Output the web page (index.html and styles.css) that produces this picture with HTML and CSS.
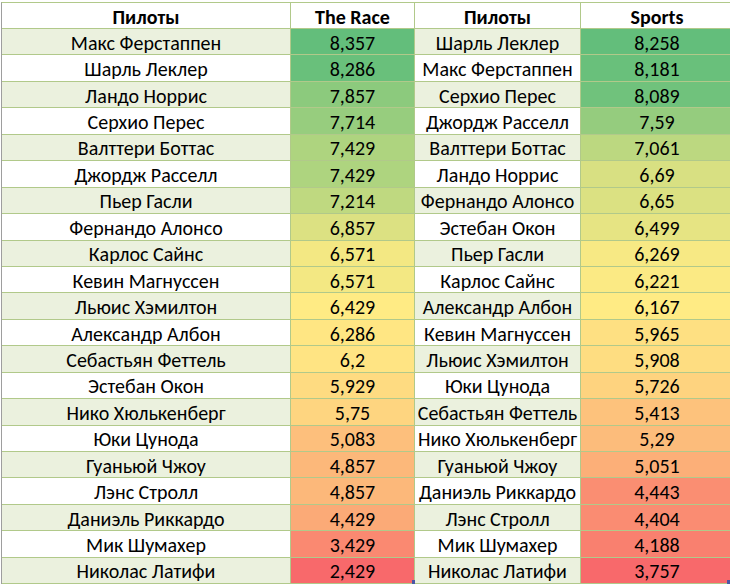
FILE: index.html
```html
<!DOCTYPE html>
<html lang="ru">
<head>
<meta charset="utf-8">
<title>Пилоты</title>
<link rel="stylesheet" href="styles.css">
</head>
<body>
<div class="sheet">
  <div class="grid">
    <div class="cell head">Пилоты</div><div class="cell head">The Race</div><div class="cell head">Пилоты</div><div class="cell head last">Sports</div>

    <div class="cell alt">Макс Ферстаппен</div><div class="cell num" style="background:rgb(99,190,123)">8,357</div><div class="cell alt">Шарль Леклер</div><div class="cell num last" style="background:rgb(99,190,123)">8,258</div>
    <div class="cell">Шарль Леклер</div><div class="cell num" style="background:rgb(105,192,123)">8,286</div><div class="cell">Макс Ферстаппен</div><div class="cell num last" style="background:rgb(105,192,123)">8,181</div>
    <div class="cell alt">Ландо Норрис</div><div class="cell num" style="background:rgb(140,202,125)">7,857</div><div class="cell alt">Серхио Перес</div><div class="cell num last" style="background:rgb(112,194,124)">8,089</div>
    <div class="cell">Серхио Перес</div><div class="cell num" style="background:rgb(151,205,126)">7,714</div><div class="cell">Джордж Расселл</div><div class="cell num last" style="background:rgb(149,204,126)">7,59</div>
    <div class="cell alt">Валттери Боттас</div><div class="cell num" style="background:rgb(174,212,127)">7,429</div><div class="cell alt">Валттери Боттас</div><div class="cell num last" style="background:rgb(188,216,128)">7,061</div>
    <div class="cell">Джордж Расселл</div><div class="cell num" style="background:rgb(174,212,127)">7,429</div><div class="cell">Ландо Норрис</div><div class="cell num last" style="background:rgb(216,224,130)">6,69</div>
    <div class="cell alt">Пьер Гасли</div><div class="cell num" style="background:rgb(191,217,128)">7,214</div><div class="cell alt">Фернандо Алонсо</div><div class="cell num last" style="background:rgb(219,225,130)">6,65</div>
    <div class="cell">Фернандо Алонсо</div><div class="cell num" style="background:rgb(220,225,130)">6,857</div><div class="cell">Эстебан Окон</div><div class="cell num last" style="background:rgb(230,228,131)">6,499</div>
    <div class="cell alt">Карлос Сайнс</div><div class="cell num" style="background:rgb(243,232,131)">6,571</div><div class="cell alt">Пьер Гасли</div><div class="cell num last" style="background:rgb(247,233,132)">6,269</div>
    <div class="cell">Кевин Магнуссен</div><div class="cell num" style="background:rgb(243,232,131)">6,571</div><div class="cell">Карлос Сайнс</div><div class="cell num last" style="background:rgb(251,234,132)">6,221</div>
    <div class="cell alt">Льюис Хэмилтон</div><div class="cell num" style="background:rgb(255,235,132)">6,429</div><div class="cell alt">Александр Албон</div><div class="cell num last" style="background:rgb(255,235,132)">6,167</div>
    <div class="cell">Александр Албон</div><div class="cell num" style="background:rgb(255,230,131)">6,286</div><div class="cell">Кевин Магнуссен</div><div class="cell num last" style="background:rgb(254,224,130)">5,965</div>
    <div class="cell alt">Себастьян Феттель</div><div class="cell num" style="background:rgb(255,228,131)">6,2</div><div class="cell alt">Льюис Хэмилтон</div><div class="cell num last" style="background:rgb(254,221,129)">5,908</div>
    <div class="cell">Эстебан Окон</div><div class="cell num" style="background:rgb(254,219,129)">5,929</div><div class="cell">Юки Цунода</div><div class="cell num last" style="background:rgb(254,211,127)">5,726</div>
    <div class="cell alt">Нико Хюлькенберг</div><div class="cell num" style="background:rgb(254,213,128)">5,75</div><div class="cell alt">Себастьян Феттель</div><div class="cell num last" style="background:rgb(253,194,124)">5,413</div>
    <div class="cell">Юки Цунода</div><div class="cell num" style="background:rgb(253,191,124)">5,083</div><div class="cell">Нико Хюлькенберг</div><div class="cell num last" style="background:rgb(252,188,123)">5,29</div>
    <div class="cell alt">Гуаньюй Чжоу</div><div class="cell num" style="background:rgb(252,184,122)">4,857</div><div class="cell alt">Гуаньюй Чжоу</div><div class="cell num last" style="background:rgb(252,175,120)">5,051</div>
    <div class="cell">Лэнс Стролл</div><div class="cell num" style="background:rgb(252,184,122)">4,857</div><div class="cell">Даниэль Риккардо</div><div class="cell num last" style="background:rgb(250,142,114)">4,443</div>
    <div class="cell alt">Даниэль Риккардо</div><div class="cell num" style="background:rgb(251,170,119)">4,429</div><div class="cell alt">Лэнс Стролл</div><div class="cell num last" style="background:rgb(250,140,114)">4,404</div>
    <div class="cell">Мик Шумахер</div><div class="cell num" style="background:rgb(250,137,113)">3,429</div><div class="cell">Мик Шумахер</div><div class="cell num last" style="background:rgb(249,128,111)">4,188</div>
    <div class="cell alt">Николас Латифи</div><div class="cell num" style="background:rgb(248,105,107)">2,429</div><div class="cell alt">Николас Латифи</div><div class="cell num last" style="background:rgb(248,105,107)">3,757</div>
  </div>
  <span class="handle handle-a"></span>
  <span class="handle handle-b"></span>
</div>
</body>
</html>
```

FILE: styles.css
```css
html, body {
  margin: 0;
  padding: 0;
  background: #ffffff;
  overflow: hidden;
}

body {
  width: 730px;
  height: 584px;
  font-family: Carlito, Calibri, "Liberation Sans", Arial, sans-serif;
  color: #000000;
}

.sheet {
  position: relative;
  width: 730px;
  height: 584px;
  overflow: hidden;
  padding-top: 2px;
  box-sizing: border-box;
}

.grid {
  display: grid;
  grid-template-columns: 289px 124px 166px 152px;
  grid-template-rows: 26px;
  grid-auto-rows: 26.45px;
  width: 731px;
  border-top: 1px solid #b1c98a;
  border-left: 1px solid #9e9e9e;
  margin-left: 1px;
}

.cell {
  display: flex;
  align-items: center;
  justify-content: center;
  padding-top: 2px;
  box-sizing: border-box;
  border-right: 1px solid #b1c98a;
  border-bottom: 1px solid #b1c98a;
  font-size: 20px;
  white-space: nowrap;
  background: #ffffff;
}

.cell.alt {
  background: #ebf1de;
}

.cell.last {
  border-right: none;
}

.cell.head {
  font-weight: bold;
}

.handle {
  position: absolute;
  width: 3px;
  height: 4px;
  background: #4b57a6;
}

.handle-a {
  left: 412px;
  top: 580px;
}

.handle-b {
  left: 727px;
  top: 580px;
}
```
